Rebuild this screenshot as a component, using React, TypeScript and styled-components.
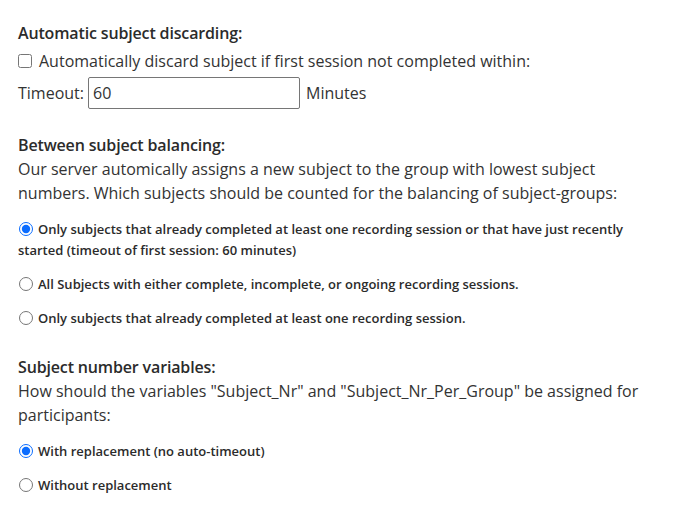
import React from "react";
import styled, { createGlobalStyle } from "styled-components";

const GlobalStyle = createGlobalStyle`
  body {
    margin: 0;
    background: #fff;
    font-family: "Open Sans", "Noto Sans", sans-serif;
    color: #333;
  }
`;

const Page = styled.div`
  padding: 21px 18px 0 18px;
  width: 674px;
  box-sizing: border-box;
`;

const Section = styled.div<{ $gap?: number }>`
  margin-bottom: ${(p) => p.$gap ?? 26}px;
`;

const Heading = styled.div`
  font-size: 16px;
  font-weight: 600;
  line-height: 24px;
  color: #2b2b2b;
  letter-spacing: -0.15px;
`;

const Text = styled.div`
  font-size: 16px;
  line-height: 24px;
`;

const Row = styled.label`
  display: flex;
  align-items: center;
  gap: 4px;
  font-size: 16px;
  line-height: 30px;
  margin-top: 1px;
`;

const Check = styled.input`
  margin: 0 3px 0 0;
  width: 14px;
  height: 14px;
`;

const TimeoutInput = styled.input`
  width: 212px;
  height: 32px;
  box-sizing: border-box;
  border: 1px solid #767676;
  border-radius: 2px;
  padding: 0 4px;
  font: inherit;
  font-size: 16px;
  color: #333;
  margin: 0 2px 0 0;
`;

const Options = styled.div`
  display: flex;
  flex-direction: column;
  gap: 13px;
  margin-top: 14px;
`;

const Option = styled.label`
  display: block;
  font-size: 13px;
  font-weight: 600;
  line-height: 21px;
  color: #2b2b2b;
`;

const Radio = styled.input`
  margin: 0 5px 0 1px;
  width: 14px;
  height: 14px;
  vertical-align: -2px;
  accent-color: #0a6cff;
`;

type Opt = { text: string; checked?: boolean };

const RadioGroup = ({ name, options }: { name: string; options: Opt[] }) => (
  <Options>
    {options.map((o) => (
      <Option key={o.text}>
        <Radio type="radio" name={name} defaultChecked={o.checked} />
        {o.text}
      </Option>
    ))}
  </Options>
);

export default function App() {
  return (
    <Page>
      <GlobalStyle />
      <Section $gap={24}>
        <Heading>Automatic subject discarding:</Heading>
        <Row>
          <Check type="checkbox" />
          Automatically discard subject if first session not completed within:
        </Row>
        <Row>
          Timeout:
          <TimeoutInput type="text" defaultValue="60" />
          Minutes
        </Row>
      </Section>
      <Section>
        <Heading>Between subject balancing:</Heading>
        <Text>
          Our server automically assigns a new subject to the group with lowest subject
          numbers. Which subjects should be counted for the balancing of subject-groups:
        </Text>
        <RadioGroup
          name="balancing"
          options={[
            {
              text: "Only subjects that already completed at least one recording session or that have just recently started (timeout of first session: 60 minutes)",
              checked: true,
            },
            { text: "All Subjects with either complete, incomplete, or ongoing recording sessions." },
            { text: "Only subjects that already completed at least one recording session." },
          ]}
        />
      </Section>
      <Section>
        <Heading>Subject number variables:</Heading>
        <Text>
          How should the variables "Subject_Nr" and "Subject_Nr_Per_Group" be assigned for
          participants:
        </Text>
        <RadioGroup
          name="vars"
          options={[
            { text: "With replacement (no auto-timeout)", checked: true },
            { text: "Without replacement" },
          ]}
        />
      </Section>
    </Page>
  );
}
